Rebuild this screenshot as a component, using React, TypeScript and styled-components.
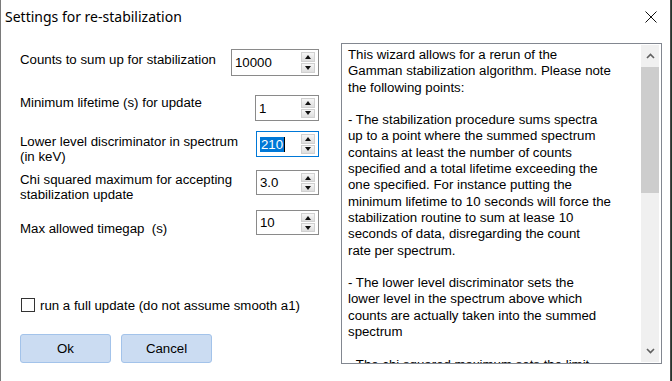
import React from 'react'
import styled, { createGlobalStyle } from 'styled-components'

const GlobalStyle = createGlobalStyle`
  html, body {
    margin: 0;
    padding: 0;
    background: #26352e;
  }
  body {
    font-family: 'Liberation Sans', Arial, sans-serif;
  }
`

const Window = styled.div`
  width: 669px;
  height: 381px;
  background: #fff;
  border-left: 1px solid #7a7a7a;
  border-right: 1px solid #4a4a4a;
  display: flex;
  flex-direction: column;
  overflow: hidden;
`

const TitleBar = styled.div`
  height: 33px;
  flex: none;
  display: flex;
  align-items: center;
  justify-content: space-between;
  padding: 0 13px 0 4px;
  font-family: 'Noto Sans', 'Open Sans', sans-serif;
  font-size: 14px;
  color: #000;
`

const Content = styled.div`
  display: flex;
  flex: 1;
`

const LeftColumn = styled.div`
  width: 321px;
  padding: 16px 0 0 19px;
  display: flex;
  flex-direction: column;
`

const Rows = styled.div`
  width: 299px;
  display: flex;
  flex-direction: column;
`

const FieldRow = styled.div<{ $h: number }>`
  height: ${p => p.$h}px;
  display: flex;
  justify-content: space-between;
  align-items: flex-start;
`

const Label = styled.div<{ $top: number }>`
  padding-top: ${p => p.$top}px;
  font-size: 13.25px;
  line-height: 15px;
  white-space: pre;
  color: #000;
`

const SpinBox = styled.div<{ $w: number; $h: number; $focused?: boolean }>`
  box-sizing: border-box;
  width: ${p => p.$w}px;
  height: ${p => p.$h}px;
  border: 1px solid ${p => (p.$focused ? '#0078d7' : '#8a8a8a')};
  background: #fff;
  display: flex;
  align-items: center;
  padding-left: 3px;
  font-size: 13.25px;
  color: #000;
`

const Selected = styled.span`
  background: #0078d7;
  color: #fff;
  line-height: 15px;
  padding: 0 1px;
`

const Caret = styled.span`
  width: 1px;
  height: 15px;
  background: #000;
`

const Spinner = styled.div`
  margin-left: auto;
  margin-right: 3px;
  width: 14px;
  align-self: stretch;
  margin-top: 2px;
  margin-bottom: 2px;
  display: flex;
  flex-direction: column;
  gap: 1px;
`

const SpinHalf = styled.div<{ $down?: boolean }>`
  flex: 1;
  box-sizing: border-box;
  border: 1px solid #d0d0d0;
  background: linear-gradient(#f6f6f6, #dedede);
  display: flex;
  align-items: center;
  justify-content: center;

  &::after {
    content: '';
    width: 0;
    height: 0;
    border-left: 3.5px solid transparent;
    border-right: 3.5px solid transparent;
    ${p => (p.$down ? 'border-top: 4px solid #111;' : 'border-bottom: 4px solid #111;')}
  }
`

const CheckRow = styled.label`
  margin-top: 62px;
  display: flex;
  align-items: center;
  gap: 5px;
  font-size: 13.25px;
  color: #000;
  height: 16px;
`

const CheckBox = styled.span`
  box-sizing: border-box;
  width: 14px;
  height: 14px;
  border: 1px solid #333;
  background: #fff;
  margin-left: 1px;
`

const ButtonRow = styled.div`
  margin-top: 21px;
  display: flex;
  gap: 10px;
`

const Button = styled.button`
  box-sizing: border-box;
  width: 91px;
  height: 29px;
  border: 1px solid #a3c3ea;
  border-radius: 3px;
  background: #cbdcf2;
  font-family: 'Liberation Sans', Arial, sans-serif;
  font-size: 13.25px;
  color: #000;
  padding: 0;
`

const TextPanel = styled.div`
  margin-top: 10px;
  box-sizing: border-box;
  width: 321px;
  height: 321px;
  border: 1px solid #828790;
  display: flex;
`

const TextBody = styled.div`
  flex: 1;
  padding: 3px 0 0 6px;
  white-space: pre;
  font-size: 13.25px;
  line-height: 16.3px;
  color: #000;
  overflow: hidden;
`

const Scrollbar = styled.div`
  width: 18px;
  margin: 1px 2px 1px 0;
  background: #f0f0f0;
  display: flex;
  flex-direction: column;
`

const ScrollArrow = styled.div`
  height: 22px;
  flex: none;
  display: flex;
  align-items: center;
  justify-content: center;
`

const Thumb = styled.div`
  height: 126px;
  background: #cdcdcd;
`

const Track = styled.div`
  flex: 1;
`

const rows = [
  { label: 'Counts to sum up for stabilization', value: '10000', h: 46, top: 3, w: 88, bh: 27 },
  { label: 'Minimum lifetime (s) for update', value: '1', h: 36, top: 0, w: 64, bh: 26 },
  { label: 'Lower level discriminator in spectrum\n(in keV)', value: '210', h: 39, top: 3, w: 63, bh: 26, focused: true },
  { label: 'Chi squared maximum for accepting\nstabilization update', value: '3.0', h: 40, top: 2, w: 63, bh: 25 },
  { label: 'Max allowed timegap  (s)', value: '10', h: 25, top: 11, w: 63, bh: 25 },
]

const helpText = `This wizard allows for a rerun of the
Gamman stabilization algorithm. Please note
the following points:

- The stabilization procedure sums spectra
up to a point where the summed spectrum
contains at least the number of counts
specified and a total lifetime exceeding the
one specified. For instance putting the
minimum lifetime to 10 seconds will force the
stabilization routine to sum at lease 10
seconds of data, disregarding the count
rate per spectrum.

- The lower level discriminator sets the
lower level in the spectrum above which
counts are actually taken into the summed
spectrum

- The chi squared maximum sets the limit`

const Chevron = ({ down }: { down?: boolean }) => (
  <svg width="9" height="6" viewBox="0 0 9 6">
    <path
      d={down ? 'M1 1 L4.5 4.5 L8 1' : 'M1 5 L4.5 1.5 L8 5'}
      fill="none"
      stroke="#606060"
      strokeWidth="1.6"
    />
  </svg>
)

export default function App() {
  return (
    <>
      <GlobalStyle />
      <Window>
        <TitleBar>
          <span>Settings for re-stabilization</span>
          <svg width="12" height="12" viewBox="0 0 12 12">
            <path d="M0.5 0.5 L11.5 11.5 M11.5 0.5 L0.5 11.5" stroke="#111" strokeWidth="1" />
          </svg>
        </TitleBar>
        <Content>
          <LeftColumn>
            <Rows>
              {rows.map(r => (
                <FieldRow key={r.label} $h={r.h}>
                  <Label $top={r.top}>
                    {r.label.split('\n').map(line => (
                      <div key={line}>{line}</div>
                    ))}
                  </Label>
                  <SpinBox $w={r.w} $h={r.bh} $focused={r.focused}>
                    {r.focused ? (
                      <>
                        <Selected>{r.value}</Selected>
                        <Caret />
                      </>
                    ) : (
                      r.value
                    )}
                    <Spinner>
                      <SpinHalf />
                      <SpinHalf $down />
                    </Spinner>
                  </SpinBox>
                </FieldRow>
              ))}
            </Rows>
            <CheckRow>
              <CheckBox />
              run a full update (do not assume smooth a1)
            </CheckRow>
            <ButtonRow>
              <Button>Ok</Button>
              <Button>Cancel</Button>
            </ButtonRow>
          </LeftColumn>
          <TextPanel>
            <TextBody>{helpText}</TextBody>
            <Scrollbar>
              <ScrollArrow>
                <Chevron />
              </ScrollArrow>
              <Thumb />
              <Track />
              <ScrollArrow>
                <Chevron down />
              </ScrollArrow>
            </Scrollbar>
          </TextPanel>
        </Content>
      </Window>
    </>
  )
}
